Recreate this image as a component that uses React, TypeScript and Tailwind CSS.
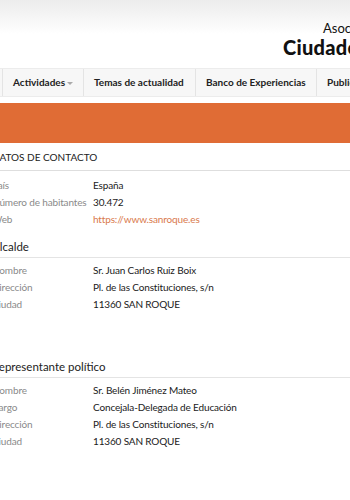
import React from 'react';

const font = { fontFamily: 'Lato, "Noto Sans", sans-serif' };

type Row = { label: string; value: string; link?: boolean };

const contacto: Row[] = [
  { label: 'País', value: 'España' },
  { label: 'Número de habitantes', value: '30.472' },
  { label: 'Web', value: 'https://www.sanroque.es', link: true },
];

const alcalde: Row[] = [
  { label: 'Nombre', value: 'Sr. Juan Carlos Ruiz Boix' },
  { label: 'Dirección', value: 'Pl. de las Constituciones, s/n' },
  { label: 'Ciudad', value: '11360 SAN ROQUE' },
];

const representante: Row[] = [
  { label: 'Nombre', value: 'Sr. Belén Jiménez Mateo' },
  { label: 'Cargo', value: 'Concejala-Delegada de Educación' },
  { label: 'Dirección', value: 'Pl. de las Constituciones, s/n' },
  { label: 'Ciudad', value: '11360 SAN ROQUE' },
];

const Rows: React.FC<{ rows: Row[] }> = ({ rows }) => (
  <div className="mt-[4px]">
    {rows.map((r) => (
      <div key={r.label} className="flex h-[17px] items-center text-[10px] tracking-[-0.15px] whitespace-nowrap">
        <div className="w-[101px] shrink-0 text-[#8a8a8a]">{r.label}</div>
        <div className={r.link ? 'text-[#d9794c]' : 'text-[#1a1a1a]'}>{r.value}</div>
      </div>
    ))}
  </div>
);

const App: React.FC = () => {
  return (
    <div className="w-[350px] h-[500px] overflow-hidden bg-white" style={font}>
      {/* cabecera */}
      <header className="h-[68px] bg-gradient-to-b from-[#ececec] via-white to-white overflow-hidden">
        <div className="pl-[283px] pt-[20px] whitespace-nowrap text-[#111]">
          <div className="pl-[40px] text-[13px] leading-[16px]">Asociación Internacional de</div>
          <div className="text-[20px] leading-[22px] font-black tracking-[0.3px]">Ciudades Educadoras</div>
        </div>
      </header>

      {/* menú */}
      <nav className="h-[29px] flex bg-[#f7f7f7] border-y border-[#ececec] text-[10px] font-bold text-[#222] whitespace-nowrap overflow-hidden">
        <div className="w-[2px] shrink-0" />
        <div className="w-[81px] shrink-0 border-l border-[#e4e4e4] flex items-center pl-[10px]">
          Actividades
          <span className="ml-[2px] mt-[1px] border-x-[3px] border-t-[3px] border-x-transparent border-t-[#aaa]" />
        </div>
        <div className="w-[112px] shrink-0 border-l border-[#e4e4e4] flex items-center pl-[10px]">Temas de actualidad</div>
        <div className="w-[121px] shrink-0 border-l border-[#e4e4e4] flex items-center pl-[10px]">Banco de Experiencias</div>
        <div className="shrink-0 border-l border-[#e4e4e4] flex items-center pl-[10px]">Publicaciones</div>
      </nav>

      <div className="mt-[6px] h-[40px] bg-[#e06c35]" />

      {/* contenido */}
      <main className="ml-[-8px]">
        <div className="pt-[7px] pb-[6px] border-b border-[#dedede] text-[10px] leading-[14px] text-[#222] uppercase">
          Datos de contacto
        </div>
        <div className="mt-[6px]">
          <Rows rows={contacto} />
        </div>

        <h3 className="mt-[10px] text-[11.5px] leading-[18px] text-[#222] border-b border-[#e4e4e4] pb-[1px]">Alcalde</h3>
        <Rows rows={alcalde} />

        <h3 className="mt-[45px] text-[11.5px] leading-[18px] text-[#222] border-b border-[#e4e4e4] pb-[1px]">
          Representante político
        </h3>
        <Rows rows={representante} />
      </main>
    </div>
  );
};

export default App;
